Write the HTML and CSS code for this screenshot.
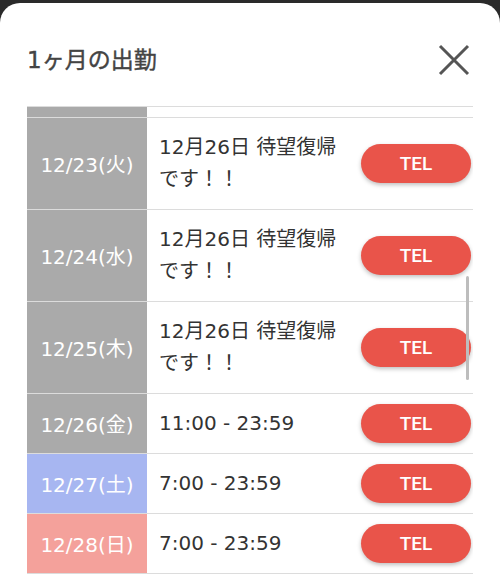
FILE: index.html
```html
<!DOCTYPE html>
<html lang="ja">
<head>
    <meta charset="UTF-8">
    <title>1ヶ月の出勤</title>
    <link rel="stylesheet" href="styles.css">
</head>
<body>
    <div class="modal">
        <!--ヘッダー-->
        <div class="modal-head">
            <h2 class="modal-title">1ヶ月の出勤</h2>
            <svg class="close" width="32" height="32" viewBox="0 0 32 32">
                <path d="M2 2 L30 30 M30 2 L2 30" stroke="#555" stroke-width="3" fill="none"/>
            </svg>
        </div>

        <!--出勤リスト-->
        <div class="list">
            <div class="list-inner">
                <div class="row">
                    <div class="day gray">12/22(月)</div>
                    <div class="time">12月26日 待望復帰です！！</div>
                    <div class="tel"><a class="tel-btn" href="#">TEL</a></div>
                </div>
                <div class="row">
                    <div class="day gray">12/23(火)</div>
                    <div class="time">12月26日 待望復帰です！！</div>
                    <div class="tel"><a class="tel-btn" href="#">TEL</a></div>
                </div>
                <div class="row">
                    <div class="day gray">12/24(水)</div>
                    <div class="time">12月26日 待望復帰です！！</div>
                    <div class="tel"><a class="tel-btn" href="#">TEL</a></div>
                </div>
                <div class="row">
                    <div class="day gray">12/25(木)</div>
                    <div class="time">12月26日 待望復帰です！！</div>
                    <div class="tel"><a class="tel-btn" href="#">TEL</a></div>
                </div>
                <div class="row">
                    <div class="day gray">12/26(金)</div>
                    <div class="time">11:00 - 23:59</div>
                    <div class="tel"><a class="tel-btn" href="#">TEL</a></div>
                </div>
                <div class="row">
                    <div class="day sat">12/27(土)</div>
                    <div class="time">7:00 - 23:59</div>
                    <div class="tel"><a class="tel-btn" href="#">TEL</a></div>
                </div>
                <div class="row">
                    <div class="day sun">12/28(日)</div>
                    <div class="time">7:00 - 23:59</div>
                    <div class="tel"><a class="tel-btn" href="#">TEL</a></div>
                </div>
            </div>
            <div class="scrollbar"></div>
        </div>
    </div>
</body>
</html>
```

FILE: styles.css
```css
body {
    margin: 0;
    background-color: #2a2a2a;
    font-family: "DejaVu Sans", "Noto Sans CJK JP", sans-serif;
}

.modal {
    margin-top: 3px;
    height: 578px;
    padding: 0 27px;
    background-color: #fff;
    border-radius: 20px 20px 0 0;
    overflow: hidden;
}

/*ヘッダー*/
.modal-head {
    display: flex;
    align-items: center;
    justify-content: space-between;
    height: 40px;
    padding-top: 37px;
    margin-bottom: 26px;
}

.modal-title {
    margin: 0;
    font-size: 23px;
    font-weight: 400;
    -webkit-text-stroke: 0.4px #444; /*少し太く*/
    color: #444;
    line-height: 40px;
}

.close {
    display: block;
    margin-right: 3px;
}

/*リスト*/
.list {
    position: relative;
    height: 475px;
    border-top: 1px solid #dcdcdc;
    overflow: hidden;
}

.list-inner {
    margin-top: -81px; /*スクロール途中*/
}

.row {
    display: grid;
    grid-template-columns: 120px 1fr 110px;
    padding-right: 2px;
    border-bottom: 1px solid #dcdcdc;
}

.day {
    display: flex;
    align-items: center;
    justify-content: center;
    color: #fff;
    font-size: 20px;
}

.gray { background-color: #aaaaaa; }
.sat { background-color: #a7b6f1; }
.sun { background-color: #f4a19b; }

.time {
    padding: 13px 14px 14px 12px;
    font-size: 20px;
    line-height: 32px;
    color: #333;
}

.tel {
    display: flex;
    align-items: center;
}

.tel-btn {
    display: block;
    width: 110px;
    height: 39px;
    line-height: 39px;
    border-radius: 20px;
    background-color: #e9544a;
    box-shadow: 0 2px 4px rgba(0, 0, 0, 0.25);
    color: #fff;
    text-align: center;
    text-decoration: none;
    font-family: Roboto, "Liberation Sans", sans-serif;
    font-size: 19px;
    font-weight: 500;
}

/*スクロールバー*/
.scrollbar {
    position: absolute;
    top: 169px;
    right: 4px;
    width: 3px;
    height: 104px;
    border-radius: 2px;
    background-color: #bdbdbd;
}
```
